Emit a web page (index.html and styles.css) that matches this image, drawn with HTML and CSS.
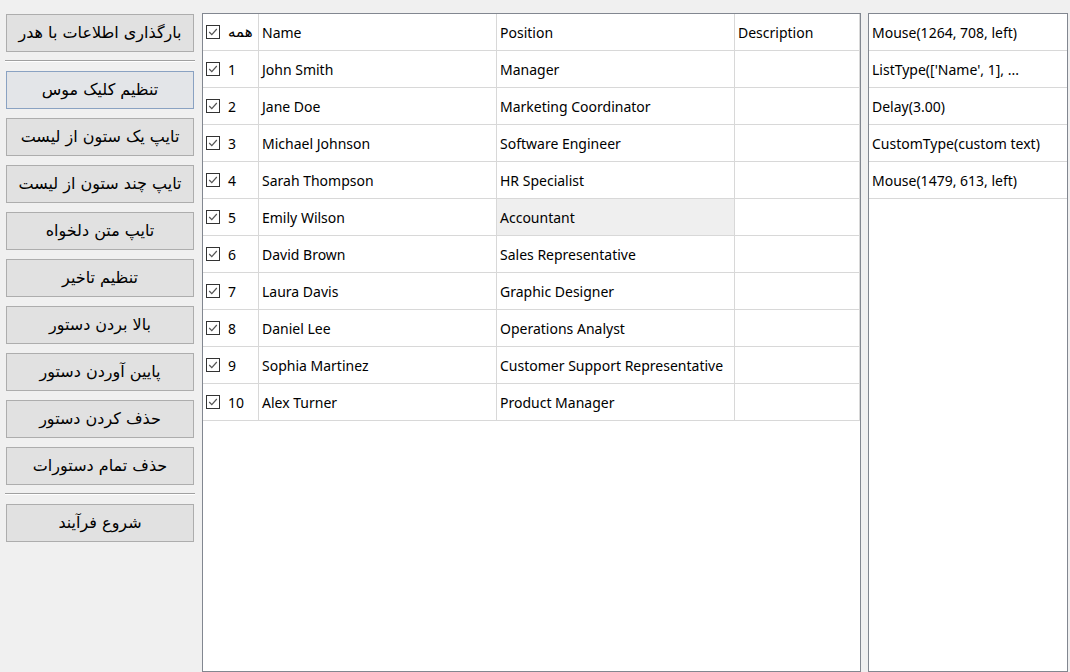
FILE: index.html
```html
<!DOCTYPE html>
<html>
<head>
<meta charset="utf-8">
<link rel="stylesheet" href="styles.css">
</head>
<body>
<div class="app">
  <div class="side">
    <button class="btn" dir="rtl">بارگذاری اطلاعات با هدر</button>
    <div class="sep"></div>
    <button class="btn active" dir="rtl">تنظیم کلیک موس</button>
    <button class="btn" dir="rtl">تایپ یک ستون از لیست</button>
    <button class="btn" dir="rtl">تایپ چند ستون از لیست</button>
    <button class="btn" dir="rtl">تایپ متن دلخواه</button>
    <button class="btn" dir="rtl">تنظیم تاخیر</button>
    <button class="btn" dir="rtl">بالا بردن دستور</button>
    <button class="btn" dir="rtl">پایین آوردن دستور</button>
    <button class="btn" dir="rtl">حذف کردن دستور</button>
    <button class="btn" dir="rtl">حذف تمام دستورات</button>
    <div class="sep"></div>
    <button class="btn" dir="rtl">شروع فرآیند</button>
  </div>

  <div class="grid-box">
    <div class="grid">
      <div class="cell chk"><span class="cb"><svg width="14" height="14" viewBox="0 0 14 14"><rect x="0.5" y="0.5" width="13" height="13" fill="#fff" stroke="#333"/><polyline points="3.2,7 5.8,9.6 10.8,4" fill="none" stroke="#555" stroke-width="1.2"/></svg></span><span class="fa">همه</span></div>
      <div class="cell">Name</div>
      <div class="cell">Position</div>
      <div class="cell last">Description</div>

      <div class="cell chk"><span class="cb"><svg width="14" height="14" viewBox="0 0 14 14"><rect x="0.5" y="0.5" width="13" height="13" fill="#fff" stroke="#333"/><polyline points="3.2,7 5.8,9.6 10.8,4" fill="none" stroke="#555" stroke-width="1.2"/></svg></span>1</div>
      <div class="cell">John Smith</div>
      <div class="cell">Manager</div>
      <div class="cell last"></div>

      <div class="cell chk"><span class="cb"><svg width="14" height="14" viewBox="0 0 14 14"><rect x="0.5" y="0.5" width="13" height="13" fill="#fff" stroke="#333"/><polyline points="3.2,7 5.8,9.6 10.8,4" fill="none" stroke="#555" stroke-width="1.2"/></svg></span>2</div>
      <div class="cell">Jane Doe</div>
      <div class="cell">Marketing Coordinator</div>
      <div class="cell last"></div>

      <div class="cell chk"><span class="cb"><svg width="14" height="14" viewBox="0 0 14 14"><rect x="0.5" y="0.5" width="13" height="13" fill="#fff" stroke="#333"/><polyline points="3.2,7 5.8,9.6 10.8,4" fill="none" stroke="#555" stroke-width="1.2"/></svg></span>3</div>
      <div class="cell">Michael Johnson</div>
      <div class="cell">Software Engineer</div>
      <div class="cell last"></div>

      <div class="cell chk"><span class="cb"><svg width="14" height="14" viewBox="0 0 14 14"><rect x="0.5" y="0.5" width="13" height="13" fill="#fff" stroke="#333"/><polyline points="3.2,7 5.8,9.6 10.8,4" fill="none" stroke="#555" stroke-width="1.2"/></svg></span>4</div>
      <div class="cell">Sarah Thompson</div>
      <div class="cell">HR Specialist</div>
      <div class="cell last"></div>

      <div class="cell chk"><span class="cb"><svg width="14" height="14" viewBox="0 0 14 14"><rect x="0.5" y="0.5" width="13" height="13" fill="#fff" stroke="#333"/><polyline points="3.2,7 5.8,9.6 10.8,4" fill="none" stroke="#555" stroke-width="1.2"/></svg></span>5</div>
      <div class="cell">Emily Wilson</div>
      <div class="cell sel">Accountant</div>
      <div class="cell last"></div>

      <div class="cell chk"><span class="cb"><svg width="14" height="14" viewBox="0 0 14 14"><rect x="0.5" y="0.5" width="13" height="13" fill="#fff" stroke="#333"/><polyline points="3.2,7 5.8,9.6 10.8,4" fill="none" stroke="#555" stroke-width="1.2"/></svg></span>6</div>
      <div class="cell">David Brown</div>
      <div class="cell">Sales Representative</div>
      <div class="cell last"></div>

      <div class="cell chk"><span class="cb"><svg width="14" height="14" viewBox="0 0 14 14"><rect x="0.5" y="0.5" width="13" height="13" fill="#fff" stroke="#333"/><polyline points="3.2,7 5.8,9.6 10.8,4" fill="none" stroke="#555" stroke-width="1.2"/></svg></span>7</div>
      <div class="cell">Laura Davis</div>
      <div class="cell">Graphic Designer</div>
      <div class="cell last"></div>

      <div class="cell chk"><span class="cb"><svg width="14" height="14" viewBox="0 0 14 14"><rect x="0.5" y="0.5" width="13" height="13" fill="#fff" stroke="#333"/><polyline points="3.2,7 5.8,9.6 10.8,4" fill="none" stroke="#555" stroke-width="1.2"/></svg></span>8</div>
      <div class="cell">Daniel Lee</div>
      <div class="cell">Operations Analyst</div>
      <div class="cell last"></div>

      <div class="cell chk"><span class="cb"><svg width="14" height="14" viewBox="0 0 14 14"><rect x="0.5" y="0.5" width="13" height="13" fill="#fff" stroke="#333"/><polyline points="3.2,7 5.8,9.6 10.8,4" fill="none" stroke="#555" stroke-width="1.2"/></svg></span>9</div>
      <div class="cell">Sophia Martinez</div>
      <div class="cell">Customer Support Representative</div>
      <div class="cell last"></div>

      <div class="cell chk"><span class="cb"><svg width="14" height="14" viewBox="0 0 14 14"><rect x="0.5" y="0.5" width="13" height="13" fill="#fff" stroke="#333"/><polyline points="3.2,7 5.8,9.6 10.8,4" fill="none" stroke="#555" stroke-width="1.2"/></svg></span>10</div>
      <div class="cell">Alex Turner</div>
      <div class="cell">Product Manager</div>
      <div class="cell last"></div>
    </div>
  </div>

  <div class="list-box">
    <div class="item">Mouse(1264, 708, left)</div>
    <div class="item">ListType(['Name', 1], ...</div>
    <div class="item">Delay(3.00)</div>
    <div class="item">CustomType(custom text)</div>
    <div class="item">Mouse(1479, 613, left)</div>
  </div>
</div>
</body>
</html>
```

FILE: styles.css
```css
html, body {
  margin: 0;
  padding: 0;
  background: #f0f0f0;
  height: 100%;
  overflow: hidden;
}

.app {
  display: flex;
  align-items: flex-start;
  padding-top: 13px;
  height: 672px;
  box-sizing: border-box;
  font-family: "Noto Sans", "DejaVu Sans", sans-serif;
  font-size: 14px;
  color: #000;
}

.side {
  display: flex;
  flex-direction: column;
  gap: 9px;
  width: 190px;
  margin-left: 5px;
  padding-top: 1px;
}

.btn {
  margin: 0 1px;
  height: 38px;
  background: #e1e1e1;
  border: 1px solid #adadad;
  font-family: "DejaVu Sans", sans-serif;
  font-size: 16px;
  color: #000;
  padding: 0 0 2px 0;
  text-align: center;
}

.btn.active {
  background: #e3e5e8;
  border-color: #8aa2c2;
}

.sep {
  height: 0;
  margin-top: -1px;
  border-top: 1px solid #a0a0a0;
  border-bottom: 1px solid #ffffff;
}

.grid-box {
  margin-left: 7px;
  width: 659px;
  height: 659px;
  box-sizing: border-box;
  border: 1px solid #828790;
  background: #fff;
}

.grid {
  display: grid;
  grid-template-columns: 56px 238px 238px 125px;
  grid-auto-rows: 37px;
}

.cell {
  box-sizing: border-box;
  border-right: 1px solid #d8d8d8;
  border-bottom: 1px solid #d8d8d8;
  display: flex;
  align-items: center;
  padding-left: 3px;
  white-space: nowrap;
  overflow: hidden;
}

.cell.chk {
  padding-left: 3px;
}

.cb {
  display: inline-flex;
  width: 14px;
  height: 14px;
  margin-right: 8px;
}

.fa {
  font-family: "DejaVu Sans", sans-serif;
  font-size: 15px;
}

.cell.sel {
  background: #efefef;
}

.list-box {
  margin-left: 7px;
  width: 200px;
  height: 659px;
  box-sizing: border-box;
  border: 1px solid #828790;
  background: #fff;
}

.item {
  height: 37px;
  box-sizing: border-box;
  border-bottom: 1px solid #d8d8d8;
  display: flex;
  align-items: center;
  padding-left: 3px;
  white-space: nowrap;
}
```
